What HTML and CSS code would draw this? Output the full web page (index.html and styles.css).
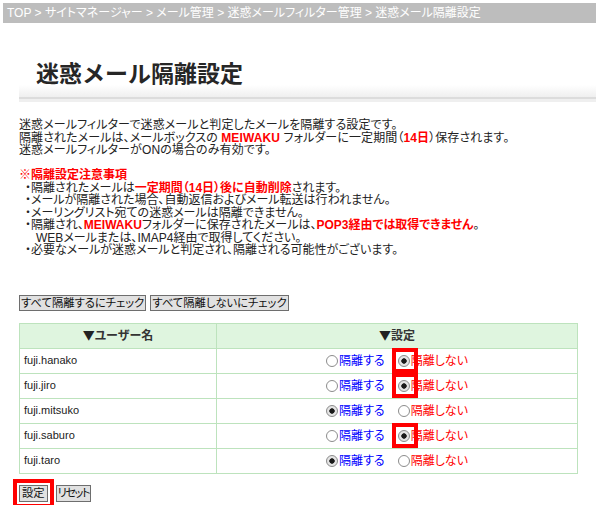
FILE: index.html
```html
<!DOCTYPE html>
<html lang="ja">
<head>
<meta charset="utf-8">
<title>迷惑メール隔離設定</title>
<link rel="stylesheet" href="styles.css">
</head>
<body>
<div class="page">
  <div class="crumbs">TOP &gt; サイトマネージャー &gt; メール管理 &gt; 迷惑メールフィルター管理 &gt; 迷惑メール隔離設定</div>
  <div class="header"><h1 class="title">迷惑メール隔離設定</h1></div>
  <div class="content">
    <p class="intro">迷惑メールフィルターで迷惑メールと判定したメールを隔離する設定です。<br>隔離されたメールは、メールボックスの <b class="em">MEIWAKU</b> フォルダーに一定期間（<b class="em">14日</b>）保存されます。<br>迷惑メールフィルターがONの場合のみ有効です。</p>
    <p class="notice-title">※隔離設定注意事項</p>
    <ul class="notes">
      <li>・隔離されたメールは<b class="em">一定期間（14日）後に自動削除</b>されます。</li>
      <li>・メールが隔離された場合、自動返信およびメール転送は行われません。</li>
      <li>・メーリングリスト宛ての迷惑メールは隔離できません。</li>
      <li>・隔離され、<b class="em">MEIWAKU</b>フォルダーに保存されたメールは、<b class="em">POP3経由では取得できません</b>。<br><span class="sub">WEBメールまたは、IMAP4経由で取得してください。</span></li>
      <li>・必要なメールが迷惑メールと判定され、隔離される可能性がございます。</li>
    </ul>
    <div class="bulk">
      <button type="button" class="btn">すべて隔離するにチェック</button>
      <button type="button" class="btn">すべて隔離しないにチェック</button>
    </div>
    <table class="users">
      <thead>
        <tr><th class="col-user"><span class="tri">▼</span>ユーザー名</th><th><span class="tri">▼</span>設定</th></tr>
      </thead>
      <tbody>
        <tr><td class="name">fuji.hanako</td><td class="choice"><label class="opt yes"><span class="mark"><input type="radio" name="u1" value="1"></span>隔離する</label><label class="opt no"><span class="mark hl"><input type="radio" name="u1" value="0" checked></span>隔離しない</label></td></tr>
        <tr><td class="name">fuji.jiro</td><td class="choice"><label class="opt yes"><span class="mark"><input type="radio" name="u2" value="1"></span>隔離する</label><label class="opt no"><span class="mark hl"><input type="radio" name="u2" value="0" checked></span>隔離しない</label></td></tr>
        <tr><td class="name">fuji.mitsuko</td><td class="choice"><label class="opt yes"><span class="mark"><input type="radio" name="u3" value="1" checked></span>隔離する</label><label class="opt no"><span class="mark"><input type="radio" name="u3" value="0"></span>隔離しない</label></td></tr>
        <tr><td class="name">fuji.saburo</td><td class="choice"><label class="opt yes"><span class="mark"><input type="radio" name="u4" value="1"></span>隔離する</label><label class="opt no"><span class="mark hl"><input type="radio" name="u4" value="0" checked></span>隔離しない</label></td></tr>
        <tr><td class="name">fuji.taro</td><td class="choice"><label class="opt yes"><span class="mark"><input type="radio" name="u5" value="1" checked></span>隔離する</label><label class="opt no"><span class="mark"><input type="radio" name="u5" value="0"></span>隔離しない</label></td></tr>
      </tbody>
    </table>
    <div class="actions">
      <button type="submit" class="btn btn-save">設定</button>
      <button type="reset" class="btn btn-reset">リセット</button>
    </div>
  </div>
</div>
</body>
</html>
```
FILE: styles.css
```css
html, body {
  margin: 0;
  padding: 0;
  background: #fff;
}
body {
  font-family: "Liberation Sans", "Noto Sans CJK JP", sans-serif;
  color: #222;
  font-feature-settings: "palt";
}
.page {
  padding: 3px;
}
.crumbs {
  background: #bdbdbd;
  color: #fff;
  height: 20px;
  line-height: 20px;
  font-size: 12px;
  padding-left: 4px;
  white-space: nowrap;
  overflow: hidden;
}
.header {
  margin-left: 16px;
  height: 76px;
  box-sizing: border-box;
  padding: 40px 0 0 17px;
  background: linear-gradient(to bottom, #fff 62px, #ececec 76px);
  border-bottom: 2px solid #dcdcdc;
  box-shadow: 0 3px 0 #efefef;
}
.title {
  margin: 0;
  font-size: 23px;
  line-height: 22px;
  font-weight: bold;
  color: #262626;
  font-feature-settings: normal;
}
.content {
  margin-left: 16px;
  font-size: 12px;
  line-height: 12.5px;
}
.intro {
  margin: 20px 0 0 0;
  letter-spacing: 0.1px;
}
.em {
  color: #f00;
  font-weight: bold;
}
.notice-title {
  margin: 12.5px 0 0 0;
  color: #f00;
  font-weight: bold;
}
.notes {
  list-style: none;
  margin: 0;
  padding: 0 0 0 6px;
}
.notes .sub {
  padding-left: 11px;
}
.bulk {
  margin-top: 38px;
  display: flex;
  gap: 4px;
}
.btn {
  font-family: "Liberation Sans", "Noto Sans CJK JP", sans-serif;
  font-feature-settings: "palt";
  font-size: 11.3px;
  line-height: 14px;
  height: 16px;
  padding: 0 1px;
  margin: 0;
  border: 1px solid #6e6e6e;
  background: #e1e1e1;
  color: #111;
  border-radius: 0;
}
.users {
  margin-top: 12px;
  width: 559px;
  border-collapse: collapse;
}
.users th, .users td {
  border: 1px solid #bde3bd;
  height: 24px;
  padding: 0 4px;
}
.users th {
  background: #dff5df;
  font-size: 12px;
  font-weight: bold;
  color: #333;
  text-align: center;
}
.tri {
  font-family: "Noto Sans CJK JP", sans-serif;
  font-feature-settings: normal;
  font-size: 12px;
  color: #222;
}
.col-user {
  width: 188px;
}
.name {
  font-size: 11px;
  color: #222;
}
.choice {
  text-align: center;
}
.opt {
  display: inline-flex;
  align-items: center;
  vertical-align: middle;
  font-size: 12px;
}
.opt.yes {
  color: #00f;
  margin-right: 13px;
}
.opt.no {
  color: #f00;
}
.mark {
  position: relative;
  display: inline-flex;
  margin-right: 1px;
}
.mark.hl::after {
  content: "";
  position: absolute;
  left: -6px;
  right: -8px;
  top: -7px;
  bottom: -6px;
  border: 4px solid #f00;
  pointer-events: none;
}
.mark input {
  appearance: none;
  -webkit-appearance: none;
  width: 12px;
  height: 12px;
  margin: 0;
  border: 1px solid #8c8c8c;
  border-radius: 50%;
  background: #fff;
  box-sizing: border-box;
}
.mark input:checked {
  background: radial-gradient(circle at center, #1a1a1a 0, #1a1a1a 2.4px, #e4e4e4 3px);
}
.actions {
  margin-top: 11px;
  display: flex;
  gap: 8px;
}
.btn-save {
  height: 17px;
  padding: 0 2px;
  outline: 4px solid #f00;
  outline-offset: 2px;
}
.btn-reset {
  height: 17px;
  padding: 0 1px;
  letter-spacing: -1.5px;
}
```
